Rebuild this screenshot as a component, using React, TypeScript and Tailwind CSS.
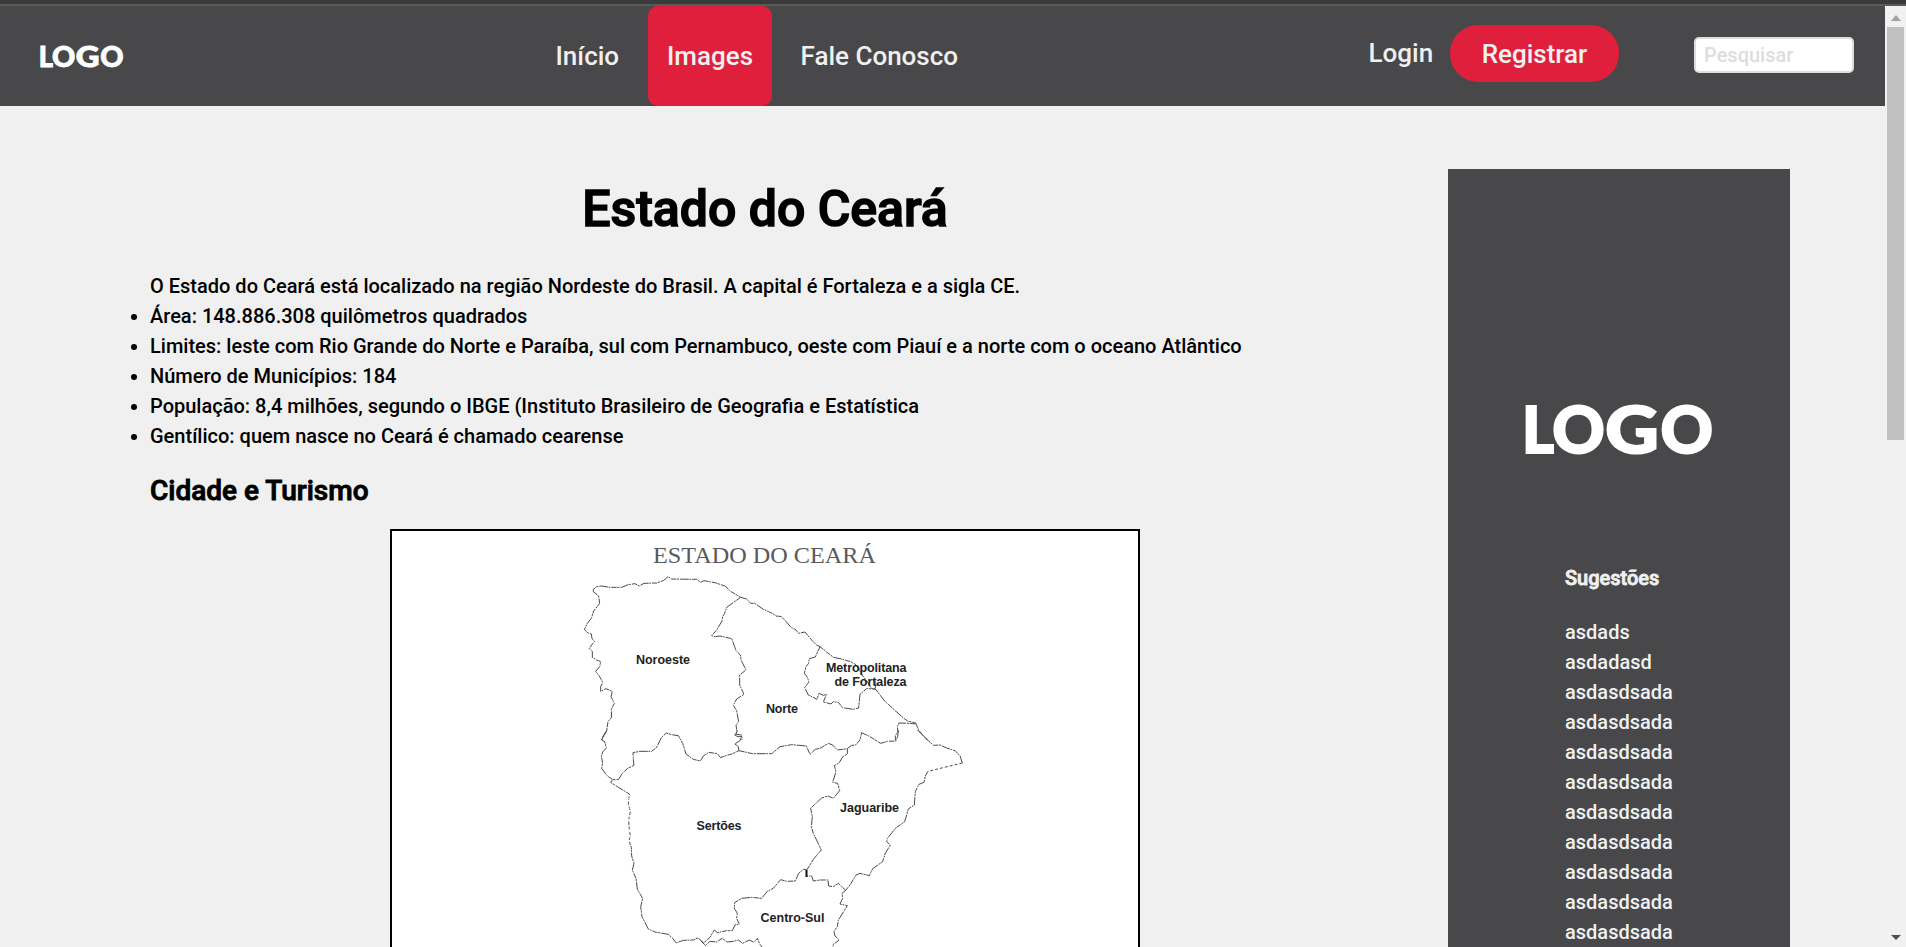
import React from "react";

const facts = [
  "Área: 148.886.308 quilômetros quadrados",
  "Limites: leste com Rio Grande do Norte e Paraíba, sul com Pernambuco, oeste com Piauí e a norte com o oceano Atlântico",
  "Número de Municípios: 184",
  "População: 8,4 milhões, segundo o IBGE (Instituto Brasileiro de Geografia e Estatística",
  "Gentílico: quem nasce no Ceará é chamado cearense",
];

const suggestions = [
  "asdads",
  "asdadasd",
  "asdasdsada",
  "asdasdsada",
  "asdasdsada",
  "asdasdsada",
  "asdasdsada",
  "asdasdsada",
  "asdasdsada",
  "asdasdsada",
  "asdasdsada",
];

function Logo({ className }: { className: string }) {
  return (
    <svg viewBox="0 0 187 50" preserveAspectRatio="none" className={className} fill="#fff" stroke="#fff" strokeWidth="2">
      <g fontFamily="Lato, sans-serif" fontWeight="900" fontSize="64">
        <text x="-3" y="47.700" textLength="32" lengthAdjust="spacingAndGlyphs">L</text>
        <text x="27.3" y="47.700" textLength="52.500" lengthAdjust="spacingAndGlyphs">O</text>
        <text x="80.300" y="47.700" textLength="53.500" lengthAdjust="spacingAndGlyphs">G</text>
        <text x="135.600" y="47.700" textLength="52.500" lengthAdjust="spacingAndGlyphs">O</text>
      </g>
    </svg>
  );
}

/* Regions of the state; each group holds one sheet of the outline at triple scale. */
function StateMap() {
  return (
    <svg viewBox="392 531 746 416" className="block h-[416px] w-[746px]">
      <g fill="none" stroke="#3c3c3c" strokeWidth="2.8" strokeLinejoin="round" strokeDasharray="16 2 7 3 26 2 5 3">
        <g transform="translate(380 520) scale(0.33333)">
          <path d="M640 215 L640 208 L650 200 L665 198 L690 202 L725 202 L745 194 L765 191 L778 198 L792 190 L830 189 L850 182 L864 170 L875 177 L950 178 L962 187 L972 182 L1005 188 L1035 198 L1052 214 L1082 232 L1100 237 L1112 250 L1124 250 L1150 268 L1166 275 L1178 281 L1192 290" />
          <path d="M640 215 L656 228 L659 250 L641 273 L634 295 L622 310 L613 328 L622 338 L634 342 L636 356 L644 364 L637 372 L628 386 L637 395 L637 412 L650 420 L662 425 L659 440 L647 454 L658 468 L668 487 L662 500 L662 514 L678 506 L697 514 L693 530 L703 550 L694 568 L695 592 L684 605 L680 632 L668 650 L665 660" />
          <path d="M1082 232 L1040 262 L1034 280 L1028 290 L1026 303 L1010 330 L995 347 L1006 350 L1020 348 L1055 356 L1064 380 L1068 392 L1081 405 L1084 422 L1098 450 L1079 465 L1079 495 L1092 523 L1070 537 L1060 556 L1070 572 L1076 605 L1068 615 L1071 635 L1064 645 L1074 650 L1086 650 L1086 660" />
        </g>
        <g transform="translate(750 520) scale(0.33333)">
          <path d="M82 288 L94 290 L106 302 L124 323 L136 328 L146 340 L165 336 L185 360 L198 374 L210 380 L230 396 L250 412 L275 417 L304 426 L315 432 L326 445 L336 465 L350 482 L364 505 L378 509 L404 543 L450 585 L472 603 L497 609 L507 632 L532 660" />
          <path d="M210 380 L196 411 L178 416 L176 430 L168 440 L163 460 L172 472 L177 486 L164 503 L175 525 L201 538 L207 520 L220 526 L230 523 L225 534 L220 546 L243 552 L250 545 L265 547 L278 563 L310 568 L326 564 L330 523 L350 506 L375 507 L378 492 L374 480" />
          <path d="M496 612 L480 610 L447 609 L442 620 L444 638 L436 645 L436 660" />
        </g>
        <g transform="translate(560 730) scale(0.33333)">
          <path d="M125 30 L134 35 L139 54 L128 66 L124 80 L128 98 L125 115 L141 137 L158 149 L175 149 L187 130 L203 115 L222 106 L220 88 L219 68 L240 64 L275 64 L290 52 L304 23 L319 9 L335 14 L355 17 L368 40 L378 72 L400 88 L421 93 L430 78 L446 67 L472 71 L482 83 L500 76 L515 72 L537 62 L578 71 L635 71 L660 50 L695 44 L739 48 L750 73 L766 58 L780 55" />
          <path d="M141 0 L132 18 L125 30" />
          <path d="M537 62 L534 48 L524 42 L540 32 L546 15 L528 13 L532 0" />
          <path d="M158 149 L152 157 L175 172 L200 187 L208 192 L205 220 L211 245 L206 270 L208 300 L211 318 L207 332 L214 352 L215 378 L222 400 L217 420 L228 445 L232 478 L248 505 L242 530 L246 560 L265 597 L285 606 L325 613 L338 625 L348 639 L370 631 L400 630 L415 623 L430 640 L450 622 L463 600 L472 608 L500 602 L517 602 L525 585 L538 582 L530 565 L532 550 L523 535 L524 518 L545 505 L575 502 L605 505 L622 484 L640 475 L662 449 L680 454 L706 453 L716 430 L730 418 L740 420" />
          <path d="M424 632 L436 647 L450 634 L470 636 L486 625 L502 636 L520 634 L535 630 L548 640 L568 630 L582 637 L592 625 L600 643 L606 651" />
          <path d="M740 420 L750 405 L760 388 L784 360 L760 310 L754 290 L757 260 L752 235 L757 230" />
        </g>
        <g transform="translate(760 730) scale(0.33333)">
          <path d="M180 55 L205 40 L218 45 L232 60 L262 56 L275 46 L287 45 L300 30 L305 8 L330 20 L362 40 L382 34 L407 33 L413 20 L415 0" />
          <path d="M473 0 L490 18 L520 46 L540 45 L560 54 L585 62 L600 77 L607 99" />
          <path d="M607 99 L504 124" strokeDasharray="9 6" />
          <path d="M504 124 L496 138 L492 157 L477 163 L466 185 L463 225 L445 237 L440 255 L434 275 L405 296 L382 326 L380 335 L391 345 L376 370 L368 395 L338 416 L328 437 L300 430 L287 436 L272 462 L257 481 L235 460 L220 470 L206 468 L204 450 L180 450 L160 453 L155 438 L140 438" />
          <path d="M262 56 L262 72 L248 80 L238 98 L223 107 L228 125 L218 157 L233 160 L239 182 L220 205 L204 198 L185 204 L157 230" />
          <path d="M257 481 L246 490 L248 505 L240 522 L262 527 L235 570 L232 590 L222 604 L225 618 L238 630 L220 643 L218 651" />
        </g>
      </g>
      <path d="M629.500 795 V846" stroke="#fff" strokeWidth="6" strokeDasharray="1.500 3.500" />
      <path d="M806.500 870 V877" stroke="#111" strokeWidth="2" />
      <text x="653" y="562.500" textLength="223" lengthAdjust="spacingAndGlyphs" fontFamily="'Liberation Serif', serif" fontSize="23" fill="#5a5a5a">ESTADO DO CEARÁ</text>
      <g fontFamily="'Liberation Sans', sans-serif" fontWeight="700" fontSize="12.5" fill="#222">
        <text x="636" y="664" textLength="54">Noroeste</text>
        <text x="766" y="712.500" textLength="32">Norte</text>
        <text x="826" y="672" textLength="80.500">Metropolitana</text>
        <text x="834.500" y="686" textLength="72">de Fortaleza</text>
        <text x="696.500" y="829.500" textLength="45">Sertões</text>
        <text x="840" y="811.500" textLength="59">Jaguaribe</text>
        <text x="760.500" y="921.500" textLength="64">Centro-Sul</text>
      </g>
    </svg>
  );
}

function Header() {
  return (
    <header className="flex h-[100px] shrink-0 bg-[#48484a] text-[26px] font-medium text-[#f0f0f0]">
      <div className="flex w-[536px] items-center pt-px pl-10">
        <Logo className="h-[22px] w-[83px] overflow-visible" />
      </div>
      <nav className="flex flex-1 items-stretch gap-[9px]">
        <a className="flex w-[103px] items-center justify-start pl-[19.5px]">Início</a>
        <a className="flex w-[124px] items-center justify-center rounded-[10px] bg-[#e01f3d]">Images</a>
        <a className="flex items-center pl-[19.5px] whitespace-nowrap">Fale Conosco</a>
      </nav>
      <div className="flex w-[517px] pt-[19px]">
        <a className="flex h-[57px] w-[82px] items-center pl-[0.5px]">Login</a>
        <button className="flex h-[57px] w-[169px] items-center justify-center rounded-[28px] bg-[#e01f3d] pt-0.5">Registrar</button>
        <input
          className="mt-3 ml-[75px] h-9 w-40 rounded-[5px] border-2 border-[#dddddd] bg-white px-2 text-[20px] font-medium placeholder:text-[#dddddd]"
          placeholder="Pesquisar"
        />
      </div>
    </header>
  );
}

export default function App() {
  return (
    <div className="flex h-[947px] w-full flex-col overflow-hidden bg-[#f0f0f0] font-['Roboto',sans-serif] text-black">
      <div className="h-1 shrink-0 bg-[#3a3a3a]" />
      <div className="h-0.5 shrink-0 bg-[#5a5a5a]" />
      <div className="flex min-h-0 flex-1">
        <div className="flex min-w-0 flex-1 flex-col">
          <Header />
          <div className="flex min-h-0 flex-1 items-start">
            <main className="w-[1448px] shrink-0 pt-[73px] pl-[150px] font-medium">
              <h1 className="mr-[68px] text-center text-[50px] leading-[60px] [-webkit-text-stroke:1.5px_#000]">Estado do Ceará</h1>
              <p className="mt-8 text-[20px] leading-[30px]">O Estado do Ceará está localizado na região Nordeste do Brasil. A capital é Fortaleza e a sigla CE.</p>
              <ul className="list-disc text-[20px] leading-[30px]">
                {facts.map((fact) => (
                  <li key={fact}>{fact}</li>
                ))}
              </ul>
              <h2 className="mt-[22px] text-[28px] leading-[36px] [-webkit-text-stroke:0.9px_#000]">Cidade e Turismo</h2>
              <figure className="mt-[20px] ml-[240px] h-[440px] w-[750px] overflow-hidden border-2 border-black bg-white">
                <StateMap />
              </figure>
            </main>
            <aside className="mt-[63px] h-[800px] w-[342px] shrink-0 bg-[#48484a] text-[20px] leading-[30px] font-medium text-[#f0f0f0]">
              <Logo className="mt-[236px] ml-[77px] h-[50px] w-[187px] overflow-visible" />
              <div className="mt-[108px] ml-[117px]">
                <h3 className="[-webkit-text-stroke:0.8px_#f0f0f0]">Sugestões</h3>
                <ul className="mt-6">
                  {suggestions.map((item, i) => (
                    <li key={i}>{item}</li>
                  ))}
                </ul>
              </div>
            </aside>
          </div>
        </div>
        <div className="flex w-[21px] shrink-0 flex-col items-center justify-between bg-[#f1f1f1] pb-[7px]">
          <div className="flex flex-col items-center">
            <svg viewBox="0 0 10 6" className="mt-[9px] mb-[6px] h-[6px] w-[10px]"><path d="M0 6 L5 0 L10 6 Z" fill="#a3a3a3" /></svg>
            <div className="h-[413px] w-[17px] bg-[#c1c1c1]" />
          </div>
          <svg viewBox="0 0 10 5" className="h-[5px] w-[10px]"><path d="M0 0 L5 5 L10 0 Z" fill="#505050" /></svg>
        </div>
      </div>
    </div>
  );
}
